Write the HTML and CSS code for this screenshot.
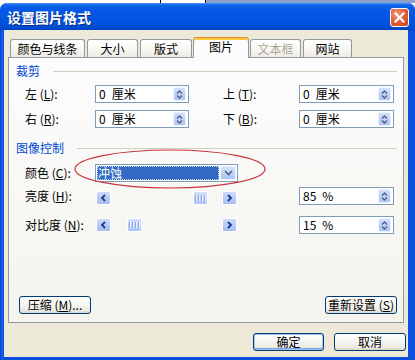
FILE: index.html
```html
<!DOCTYPE html>
<html lang="zh-CN">
<head>
<meta charset="utf-8">
<title>设置图片格式</title>
<link rel="stylesheet" href="styles.css">
</head>
<body>
<div class="top-strip"><span class="seg-a"></span><span class="seg-line"></span><span class="seg-b"></span><span class="seg-line"></span><span class="seg-c"></span></div>
<div class="window">
  <div class="titlebar">
    <span class="title">设置图片格式</span>
    <span class="close"><svg width="11" height="11" viewBox="0 0 11 11"><path d="M1.5 1.5 L9.5 9.5 M9.5 1.5 L1.5 9.5" stroke="#fff" stroke-width="2.2" stroke-linecap="square"/></svg></span>
  </div>
  <div class="frame">
    <div class="client">
      <div class="tabs">
        <div class="tab t1">颜色与线条</div>
        <div class="tab t2">大小</div>
        <div class="tab t3">版式</div>
        <div class="tab sel">图片</div>
        <div class="tab t5 disabled">文本框</div>
        <div class="tab t6">网站</div>
      </div>
      <div class="panel">
        <div class="group-head h1"><span class="gh-text">裁剪</span><span class="gh-line"></span></div>
        <div class="row crop r1">
          <label class="lbl">左 (<u>L</u>):</label>
          <div class="field w94"><span class="val">0&#8194;厘米</span><span class="spin"><svg width="11" height="13" viewBox="0 0 11 13"><path d="M3 5.5 L5.5 3 L8 5.5 M3 7.5 L5.5 10 L8 7.5" fill="none" stroke="#4d6185" stroke-width="1.4"/></svg></span></div>
          <span class="gap34"></span>
          <label class="lbl w76">上 (<u>T</u>):</label>
          <div class="field w95"><span class="val">0&#8194;厘米</span><span class="spin"><svg width="11" height="13" viewBox="0 0 11 13"><path d="M3 5.5 L5.5 3 L8 5.5 M3 7.5 L5.5 10 L8 7.5" fill="none" stroke="#4d6185" stroke-width="1.4"/></svg></span></div>
        </div>
        <div class="row crop r2">
          <label class="lbl">右 (<u>R</u>):</label>
          <div class="field w94"><span class="val">0&#8194;厘米</span><span class="spin"><svg width="11" height="13" viewBox="0 0 11 13"><path d="M3 5.5 L5.5 3 L8 5.5 M3 7.5 L5.5 10 L8 7.5" fill="none" stroke="#4d6185" stroke-width="1.4"/></svg></span></div>
          <span class="gap34"></span>
          <label class="lbl w76">下 (<u>B</u>):</label>
          <div class="field w95"><span class="val">0&#8194;厘米</span><span class="spin"><svg width="11" height="13" viewBox="0 0 11 13"><path d="M3 5.5 L5.5 3 L8 5.5 M3 7.5 L5.5 10 L8 7.5" fill="none" stroke="#4d6185" stroke-width="1.4"/></svg></span></div>
        </div>
        <div class="group-head h2"><span class="gh-text">图像控制</span><span class="gh-line"></span></div>
        <div class="row ctl r-color">
          <label class="lbl">颜色 (<u>C</u>):</label>
          <div class="combo"><span class="combo-sel">冲蚀</span><span class="drop"><svg width="9" height="6" viewBox="0 0 9 6"><path d="M1 1 L4.5 4.5 L8 1" fill="none" stroke="#4d6185" stroke-width="1.6"/></svg></span></div>
        </div>
        <div class="row ctl r-bright">
          <label class="lbl">亮度 (<u>H</u>):</label>
          <div class="scroll end">
            <span class="sbtn"><svg width="7" height="8" viewBox="0 0 7 8"><path d="M5 1 L2 4 L5 7" fill="none" stroke="#1d3b8a" stroke-width="1.8"/></svg></span>
            <span class="track"><span class="thumb" style="left:82px"><i></i><i></i><i></i><i></i></span></span>
            <span class="sbtn"><svg width="7" height="8" viewBox="0 0 7 8"><path d="M2 1 L5 4 L2 7" fill="none" stroke="#1d3b8a" stroke-width="1.8"/></svg></span>
          </div>
          <div class="field w95 push"><span class="val">85&#8194;%</span><span class="spin"><svg width="11" height="13" viewBox="0 0 11 13"><path d="M3 5.5 L5.5 3 L8 5.5 M3 7.5 L5.5 10 L8 7.5" fill="none" stroke="#4d6185" stroke-width="1.4"/></svg></span></div>
        </div>
        <div class="row ctl r-contrast">
          <label class="lbl">对比度 (<u>N</u>):</label>
          <div class="scroll">
            <span class="sbtn"><svg width="7" height="8" viewBox="0 0 7 8"><path d="M5 1 L2 4 L5 7" fill="none" stroke="#1d3b8a" stroke-width="1.8"/></svg></span>
            <span class="track"><span class="thumb" style="left:16px"><i></i><i></i><i></i><i></i></span></span>
            <span class="sbtn"><svg width="7" height="8" viewBox="0 0 7 8"><path d="M2 1 L5 4 L2 7" fill="none" stroke="#1d3b8a" stroke-width="1.8"/></svg></span>
          </div>
          <div class="field w95 push"><span class="val">15&#8194;%</span><span class="spin"><svg width="11" height="13" viewBox="0 0 11 13"><path d="M3 5.5 L5.5 3 L8 5.5 M3 7.5 L5.5 10 L8 7.5" fill="none" stroke="#4d6185" stroke-width="1.4"/></svg></span></div>
        </div>
        <div class="panel-actions">
          <button class="btn">压缩 (<u>M</u>)...</button>
          <button class="btn">重新设置 (<u>S</u>)</button>
        </div>
      </div>
      <div class="actions">
        <button class="btn default">确定</button>
        <button class="btn">取消</button>
      </div>
    </div>
  </div>
  <svg class="annotation" width="196" height="44" viewBox="0 0 196 44"><ellipse cx="98" cy="22" rx="95" ry="19" fill="none" stroke="#c8333a" stroke-width="1.2"/></svg>
</div>
</body>
</html>
```
FILE: styles.css
```css
html, body {
  margin: 0;
  padding: 0;
  background: #ffffff;
}
body {
  width: 415px;
  height: 360px;
  overflow: hidden;
  font-family: "Noto Sans CJK SC", "Liberation Sans", sans-serif;
  font-size: 12px;
  line-height: 14px;
  color: #000;
}
.top-strip {
  display: flex;
  height: 3px;
}
.seg-a { width: 160px; background: #fff; }
.seg-line { width: 1px; background: #000; }
.seg-b { width: 44px; background: #fff; }
.seg-c { flex: 1; background: #8fa2cc; }

.window {
  position: relative;
  height: 357px;
  display: flex;
  flex-direction: column;
  background: #0b48d6;
  border-radius: 7px 7px 0 0;
}
.titlebar {
  height: 27px;
  display: flex;
  align-items: center;
  padding: 0 6px 0 7px;
  border-radius: 7px 7px 0 0;
  background: linear-gradient(180deg, #4a95f7 0px, #1167ea 2px, #0659e6 6px, #0055e3 14px, #0052dc 22px, #0043c2 27px);
}
.title {
  color: #fff;
  font-weight: bold;
  font-size: 14px;
  text-shadow: 1px 1px 0 #0b2a86;
}
.close {
  margin-left: auto;
  margin-top: 2px;
  width: 19px;
  height: 19px;
  box-sizing: border-box;
  border: 1px solid #fff;
  border-radius: 3px;
  background: radial-gradient(circle at 35% 30%, #f19a7a 0, #e2613f 45%, #c9431f 100%);
  display: flex;
  align-items: center;
  justify-content: center;
}
.frame {
  flex: 1;
  display: flex;
  padding: 0 7px 3px 4px;
  background: linear-gradient(90deg, #0a3fcc 0, #1660ea 2px, #0b50dc 4px);
}
.client {
  flex: 1;
  display: flex;
  flex-direction: column;
  background: #ece9d8;
}

/* tabs */
.tabs {
  display: flex;
  align-items: flex-end;
  gap: 2px;
  height: 20px;
  margin-top: 7px;
  padding-left: 6px;
}
.tab {
  height: 18px;
  box-sizing: border-box;
  border: 1px solid #919b9c;
  border-bottom: none;
  border-radius: 3px 3px 0 0;
  background: linear-gradient(180deg, #ffffff 0, #fafaf8 40%, #ecebe4 100%);
  display: flex;
  align-items: center;
  justify-content: center;
  padding-top: 1px;
}
.t1 { width: 75px; }
.t2 { width: 51px; }
.t3 { width: 52px; }
.t5 { width: 51px; margin-left: -1px; }
.t6 { width: 49px; }
.tab.sel {
  width: 56px;
  height: 21px;
  margin-left: -1px;
  margin-bottom: -1px;
  position: relative;
  z-index: 1;
  border-top: 1px solid #e68b2c;
  background: #fcfcfe;
  box-shadow: inset 0 2px 0 #ffc73c;
  padding-top: 0;
  padding-bottom: 2px;
}
.tab.disabled { color: #aca899; }

/* panel */
.panel {
  height: 266px;
  box-sizing: border-box;
  margin: 0 4px;
  border: 1px solid #919b9c;
  background: linear-gradient(180deg, #fcfcfe 0, #f8f8f5 50%, #f4f3ee 100%);
  display: flex;
  flex-direction: column;
}
.group-head {
  display: flex;
  align-items: center;
  height: 14px;
  padding: 0 6px 0 7px;
}
.group-head.h1 { margin-top: 6px; }
.group-head.h2 { margin-top: 13px; }
.gh-text {
  color: #0046d5;
}
.gh-line {
  flex: 1;
  height: 1px;
  margin-left: 13px;
  background: #d0d0bf;
}
.row {
  display: flex;
  align-items: center;
  height: 18px;
  padding: 0 9px 0 16px;
}
.crop.r1 { margin-top: 7px; }
.crop.r2 { margin-top: 7px; }
.r-color { margin-top: 9px; }
.r-bright { margin-top: 5px; }
.r-contrast { margin-top: 11px; }
.lbl {
  width: 70px;
  flex: none;
  white-space: nowrap;
}
.lbl.w76 { width: 76px; }
.gap34 { width: 34px; flex: none; }
.field {
  height: 18px;
  box-sizing: border-box;
  border: 1px solid #7f9db9;
  background: #fff;
  display: flex;
  align-items: center;
  padding-left: 3px;
  flex: none;
}
.field.w94 { width: 94px; }
.field.w95 { width: 95px; }
.field.push { margin-left: auto; }
.val { white-space: pre; }
.spin {
  margin-left: auto;
  margin-right: 2px;
  width: 13px;
  height: 14px;
  box-sizing: border-box;
  border: 1px solid #eef2fd;
  border-radius: 2px;
  background: linear-gradient(180deg, #d5e1fd 0, #c0d1f9 50%, #afc4f3 100%);
  display: flex;
  align-items: center;
  justify-content: center;
}

.combo {
  width: 143px;
  height: 18px;
  box-sizing: border-box;
  border: 1px solid #7f9db9;
  background: #fff;
  display: flex;
  padding: 1px;
  gap: 1px;
  flex: none;
}
.combo-sel {
  flex: 1;
  background: #316ac5;
  color: #fff;
  padding-left: 1px;
  outline: 1px dotted #c8d6ee;
  outline-offset: -1px;
  line-height: 14px;
}
.drop {
  width: 16px;
  box-sizing: border-box;
  border: 1px solid #eef2fd;
  border-radius: 2px;
  background: linear-gradient(180deg, #d5e1fd 0, #c0d1f9 50%, #afc4f3 100%);
  display: flex;
  align-items: center;
  justify-content: center;
}

.scroll {
  width: 141px;
  height: 14px;
  margin-left: 1px;
  display: flex;
  background: #f6f6f2;
  flex: none;
}
.scroll.end { align-self: flex-end; }
.sbtn {
  width: 15px;
  box-sizing: border-box;
  border: 1px solid #fff;
  border-radius: 2px;
  background: linear-gradient(180deg, #cddbfc 0, #b7cbf7 55%, #a6bdf1 100%);
  display: flex;
  align-items: center;
  justify-content: center;
  flex: none;
}
.track {
  flex: 1;
  position: relative;
}
.thumb {
  position: absolute;
  top: 0;
  bottom: 0;
  width: 15px;
  box-sizing: border-box;
  border: 1px solid #fff;
  border-radius: 2px;
  background: linear-gradient(180deg, #d3e0fd 0, #bfd1fa 55%, #b0c6f5 100%);
  display: flex;
  align-items: center;
  justify-content: center;
  gap: 1px;
}
.thumb i {
  width: 1px;
  height: 6px;
  background: #8ca6e4;
  border-right: 1px solid #eef3fe;
}

.panel-actions {
  margin-top: auto;
  margin-bottom: 8px;
  display: flex;
  justify-content: space-between;
  padding: 0 6px 0 10px;
}
.btn {
  height: 18px;
  width: 72px;
  box-sizing: border-box;
  border: 1px solid #003c74;
  border-radius: 3px;
  background: linear-gradient(180deg, #ffffff 0, #f7f7f4 40%, #ebeae4 85%, #d8d3c9 100%);
  font: inherit;
  color: #000;
  padding: 0;
  line-height: 14px;
  white-space: nowrap;
}
.actions {
  display: flex;
  justify-content: flex-end;
  gap: 10px;
  margin-top: 10px;
  padding-right: 2px;
}
.actions .btn { width: 71px; }
.actions .btn + .btn { width: 72px; }
.btn.default {
  box-shadow: inset 0 0 0 1px #a6c2f3, inset 0 -1px 0 1px #7ea1e6;
}

.annotation {
  position: absolute;
  left: 72px;
  top: 144px;
}
```
